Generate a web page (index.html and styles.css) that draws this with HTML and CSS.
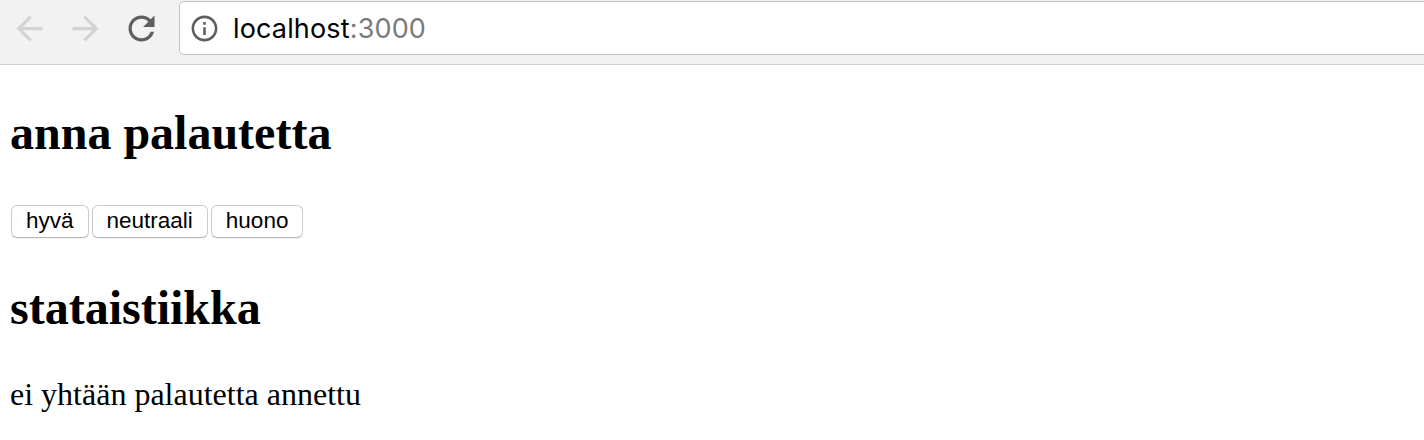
FILE: index.html
```html
<!DOCTYPE html>
<html lang="fi">
<head>
<meta charset="utf-8">
<title>localhost:3000</title>
<link rel="stylesheet" href="styles.css">
</head>
<body>
<header class="toolbar">
  <div class="nav">
    <svg class="nav-icon nav-icon--off" viewBox="0 0 24 24" aria-label="Back"><path d="M20 11H7.83l5.59-5.59L12 4l-8 8 8 8 1.41-1.41L7.83 13H20v-2z"/></svg>
    <svg class="nav-icon nav-icon--off" viewBox="0 0 24 24" aria-label="Forward"><path d="M12 4l-1.41 1.41L16.17 11H4v2h12.17l-5.58 5.59L12 20l8-8z"/></svg>
    <svg class="nav-icon" viewBox="0 0 24 24" aria-label="Reload"><path d="M17.65 6.35C16.2 4.9 14.21 4 12 4c-4.42 0-7.99 3.58-7.99 8s3.57 8 7.99 8c3.73 0 6.84-2.55 7.73-6h-2.08c-.82 2.33-3.04 4-5.65 4-3.310 0-6-2.69-6-6s2.69-6 6-6c1.66 0 3.14.69 4.22 1.78L13 11h7V4l-2.35 2.35z"/></svg>
  </div>
  <div class="omnibox">
    <svg class="info-icon" viewBox="0 0 24 24" aria-label="Info"><path d="M11 7h2v2h-2zm0 4h2v6h-2zm1-9C6.48 2 2 6.48 2 12s4.48 10 10 10 10-4.48 10-10S17.520 2 12 2zm0 18c-4.41 0-8-3.590-8-8s3.59-8 8-8 8 3.59 8 8-3.59 8-8 8z"/></svg>
    <span class="url"><span class="url-host">localhost</span><span class="url-port">:3000</span></span>
  </div>
</header>
<main class="page">
  <h2 class="heading heading--first">anna palautetta</h2>
  <div class="buttons">
    <button class="btn">hyvä</button>
    <button class="btn">neutraali</button>
    <button class="btn">huono</button>
  </div>
  <h2 class="heading heading--stats">stataistiikka</h2>
  <p class="message">ei yhtään palautetta annettu</p>
</main>
</body>
</html>
```
FILE: styles.css
```css
html, body {
  margin: 0;
  padding: 0;
  background: #ffffff;
  overflow: hidden;
}

.toolbar {
  display: flex;
  align-items: flex-start;
  height: 64px;
  background: #f2f2f2;
  border-bottom: 1px solid #d0d0d0;
  overflow: hidden;
}

.nav {
  display: flex;
  align-items: center;
  gap: 17px;
  padding-left: 10px;
  height: 56px;
}

.nav-icon {
  width: 39px;
  height: 39px;
  fill: #5f5f5f;
  flex: none;
}

.nav-icon--off {
  fill: #d3d3d3;
}

.omnibox {
  flex: 1;
  display: flex;
  align-items: center;
  height: 52px;
  margin-top: 1px;
  margin-left: 18px;
  margin-right: -20px;
  background: #ffffff;
  border: 1px solid #c2c2c2;
  border-radius: 5px;
  padding-left: 9px;
}

.info-icon {
  width: 31px;
  height: 31px;
  fill: #5f5f5f;
  flex: none;
}

.url {
  margin-left: 13px;
  font-family: Inter, "Liberation Sans", sans-serif;
  font-size: 27px;
  letter-spacing: 0.15px;
  line-height: 1;
  color: #000000;
}

.url-port {
  color: #7a7a7a;
}

.page {
  padding-left: 10px;
  font-family: "Liberation Serif", serif;
  color: #000000;
}

.heading {
  margin: 0;
  font-size: 48px;
  font-weight: bold;
  line-height: 56px;
}

.heading--first {
  margin-top: 40px;
}

.heading--stats {
  margin-top: 42px;
}

.buttons {
  display: flex;
  gap: 3px;
  margin-top: 44px;
  padding-left: 1px;
}

.btn {
  height: 33px;
  padding: 0 14px;
  background: #ffffff;
  border: 1px solid #cacaca;
  border-bottom-color: #b8b8b8;
  border-radius: 6px;
  box-shadow: 0 1px 1px rgba(0, 0, 0, 0.06);
  font-family: "Liberation Sans", Arial, sans-serif;
  font-size: 22.5px;
  line-height: 1;
  color: #000000;
}

.message {
  margin: 40px 0 0;
  font-size: 32px;
  line-height: 37px;
}
```
